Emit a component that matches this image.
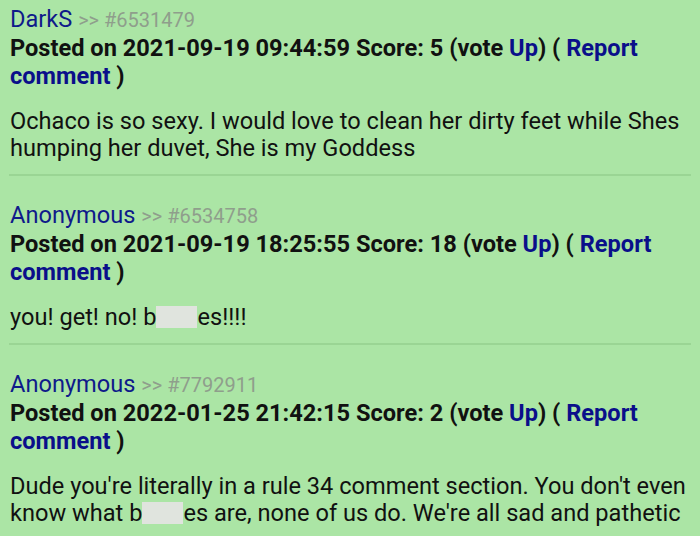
import React from "react";

const Blur = () => (
  <span className="inline-block w-[41px] h-[22px] bg-[#e0e4de] align-[-3px]" />
);

type C = {
  name: string;
  id: string;
  date: string;
  score: string;
  body: React.ReactNode;
};

const comments: C[] = [
  {
    name: "DarkS",
    id: "#6531479",
    date: "2021-09-19 09:44:59",
    score: "5",
    body: (
      <>Ochaco is so sexy. I would love to clean her dirty feet while Shes humping her duvet, She is my Goddess</>
    ),
  },
  {
    name: "Anonymous",
    id: "#6534758",
    date: "2021-09-19 18:25:55",
    score: "18",
    body: (
      <>
        you! get! no! b<Blur />es!!!!
      </>
    ),
  },
  {
    name: "Anonymous",
    id: "#7792911",
    date: "2022-01-25 21:42:15",
    score: "2",
    body: (
      <>
        Dude you're literally in a rule 34 comment section. You don't even know what b<Blur />es are, none of us do. We're all sad and pathetic
      </>
    ),
  },
];

export default function App() {
  return (
    <div
      className="w-[700px] h-[536px] overflow-hidden bg-[#abe5a5] text-[#111]"
      style={{ fontFamily: "Roboto, 'Liberation Sans', sans-serif" }}
    >
      {comments.map((c, i) => (
        <div key={i}>
          {i > 0 && <div className="mx-[9px] h-[2px] bg-[#9ad594] mt-[12px] mb-[25px]" />}
          <div className={i === 0 ? "pt-[5px] px-[10px]" : "px-[10px]"}>
            <div className="text-[23.6px] leading-[28px]">
              <span className="text-[#0f1a8a]">{c.name}</span>{" "}
              <span className="text-[20px] text-[#8f9e8c]">&gt;&gt; {c.id}</span>
            </div>
            <div className="text-[23.6px] leading-[28px] font-bold">
              Posted on {c.date} Score: {c.score} (vote <span className="text-[#0a0f8a]">Up</span>) ({" "}
              <span className="text-[#0a0f8a]">Report comment</span> )
            </div>
            <div className="text-[23.6px] leading-[27px] mt-[18px]">{c.body}</div>
          </div>
        </div>
      ))}
    </div>
  );
}
